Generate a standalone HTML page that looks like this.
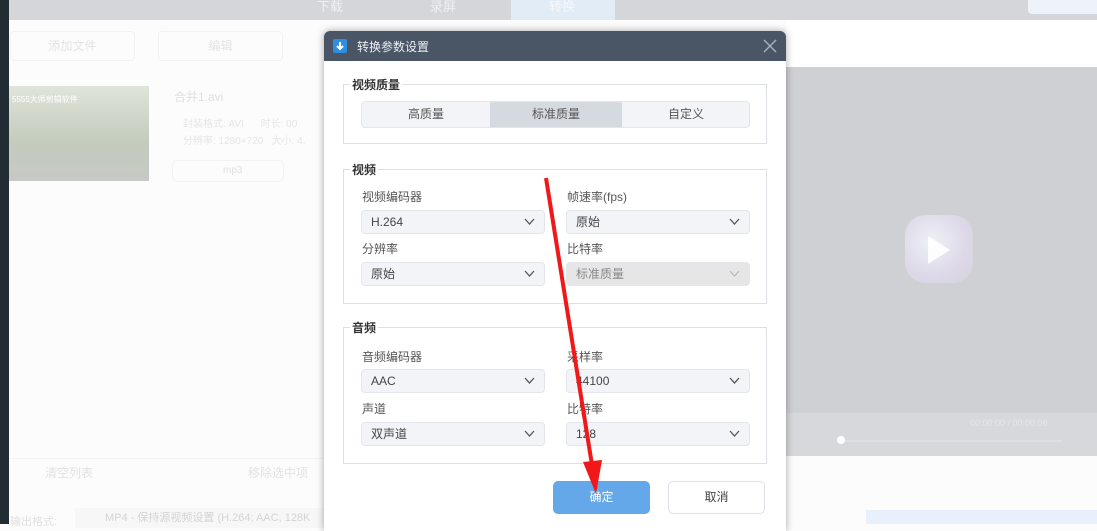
<!DOCTYPE html>
<html><head><meta charset="utf-8"><style>
*{box-sizing:border-box;margin:0;padding:0}
body{width:1097px;height:524px;overflow:hidden;background:#fcfcfc;font-family:"Liberation Sans","Noto Sans CJK SC",sans-serif;position:relative;font-size:12px;color:#444}
.a{position:absolute}
.lbl{position:absolute;font-size:12px;color:#555}
.sel{position:absolute;height:24px;background:#f2f4f7;border:1px solid #e3e6ea;border-radius:4px;font-size:12px;color:#444;padding-left:9px;line-height:22px}
.sel svg{position:absolute;right:9px;top:7px}
.fs{position:absolute;border:1px solid #dcdfe3}
.lg{position:absolute;background:#fff;font-size:12px;font-weight:bold;color:#333;padding:0 2px}
</style></head><body>
<div class="a" style="left:0;top:0;width:1097px;height:20px;background:#d5d6d9"></div>
<div class="a" style="left:0;top:0;width:9px;height:524px;background:#222d33"></div>
<div class="a" style="left:317px;top:-4px;color:#f0f0f2;font-size:13px">下载</div>
<div class="a" style="left:430px;top:-4px;color:#f0f0f2;font-size:13px">录屏</div>
<div class="a" style="left:511px;top:0;width:104px;height:20px;background:#e2ecf7"></div>
<div class="a" style="left:549px;top:-4px;color:#f5f8fb;font-size:13px">转换</div>
<div class="a" style="left:1028px;top:0;width:69px;height:14px;background:#eef3fa;border-radius:0 0 0 4px"></div>
<div class="a" style="left:10px;top:31px;width:125px;height:30px;border:1px solid #f2f2f2;border-radius:4px;color:#e4e4e4;font-size:12px;text-align:center;line-height:28px">添加文件</div>
<div class="a" style="left:158px;top:31px;width:125px;height:30px;border:1px solid #f2f2f2;border-radius:4px;color:#e4e4e4;font-size:12px;text-align:center;line-height:28px">编辑</div>
<div class="a" style="left:9px;top:86px;width:140px;height:95px;background:linear-gradient(#dfe5d9,#c3cbbd 60%,#c7c9c4)"></div>
<div class="a" style="left:12px;top:94px;color:#fff;font-size:8px">5555大师剪辑软件</div>
<div class="a" style="left:174px;top:88px;color:#e0e0e0;font-size:12px">合并1.avi</div>
<div class="a" style="left:183px;top:115px;color:#e6e6e6;font-size:10px">封装格式: AVI &nbsp;&nbsp;&nbsp;&nbsp;&nbsp;时长: 00</div>
<div class="a" style="left:183px;top:132px;color:#e6e6e6;font-size:10px">分辨率: 1280×720 &nbsp;&nbsp;大小: 4.</div>
<div class="a" style="left:172px;top:160px;width:112px;height:22px;border:1px solid #f2f2f2;border-radius:5px;color:#e0e0e0;font-size:10px;padding-left:50px;line-height:20px">mp3</div>
<div class="a" style="left:9px;top:458px;width:315px;height:1px;background:#f2f2f2"></div>
<div class="a" style="left:45px;top:464px;color:#e2e2e2;font-size:12px">清空列表</div>
<div class="a" style="left:248px;top:464px;color:#e2e2e2;font-size:12px">移除选中项</div>
<div class="a" style="left:10px;top:513px;color:#e0e0e0;font-size:11px">输出格式:</div>
<div class="a" style="left:75px;top:508px;width:249px;height:20px;background:#f7f7f7;color:#d4d4d4;font-size:11px;padding-left:30px;line-height:20px;white-space:nowrap;overflow:hidden">MP4 - 保持源视频设置 (H.264; AAC, 128K</div>
<div class="a" style="left:786px;top:20px;width:311px;height:47px;background:#fff"></div>
<div class="a" style="left:786px;top:67px;width:311px;height:346px;background:#cfd0d4"></div>
<div class="a" style="left:905px;top:215px;width:68px;height:68px;border-radius:30%;background:radial-gradient(circle at 40% 40%,#eef1f7,#ddd8e8 60%,#d4d3dc)"></div>
<div class="a" style="left:928px;top:236px;width:0;height:0;border-left:22px solid rgba(255,255,255,.9);border-top:14px solid transparent;border-bottom:14px solid transparent"></div>
<div class="a" style="left:786px;top:413px;width:311px;height:43px;background:#d7d8db"></div>
<div class="a" style="left:842px;top:440px;width:220px;height:2px;background:#e0e0e3"></div>
<div class="a" style="left:837px;top:436px;width:8px;height:8px;border-radius:50%;background:#fff"></div>
<div class="a" style="left:970px;top:418px;color:#e6e6e8;font-size:9px">00:00:00 / 00:00:06</div>
<div class="a" style="left:866px;top:510px;width:231px;height:14px;background:#e8f1fb"></div>
<!-- dialog -->
<div class="a" style="left:324px;top:31px;width:462px;height:500px;background:#fff;border-radius:6px 6px 0 0;box-shadow:0 0 8px rgba(0,0,0,.35);overflow:hidden">
<div class="a" style="left:0;top:0;width:462px;height:30px;background:#4a5566"></div>
<div class="a" style="left:9px;top:8px;width:14px;height:14px;background:#2f8ee0;border-radius:2px"></div>
<svg class="a" style="left:9px;top:8px" width="14" height="14"><path d="M7 3v6M4 7l3 3 3-3" stroke="#fff" stroke-width="2" fill="none"/></svg>
<div class="a" style="left:33px;top:7px;color:#eef0f3;font-size:12px">转换参数设置</div>
<svg class="a" style="left:439px;top:8px" width="14" height="14"><path d="M1 1l12 12M13 1L1 13" stroke="#aab2bd" stroke-width="1.4"/></svg>
</div>
<div class="fs" style="left:343px;top:84px;width:424px;height:60px"></div>
<div class="lg" style="left:350px;top:76px">视频质量</div>
<div class="a" style="left:361px;top:101px;width:389px;height:27px;border:1px solid #e3e6ea;border-radius:4px;background:#f2f4f7;overflow:hidden">
<div class="a" style="left:0;top:0;width:128px;height:25px;text-align:center;line-height:25px;color:#555">高质量</div>
<div class="a" style="left:128px;top:0;width:132px;height:25px;background:#d5dae1;text-align:center;line-height:25px;color:#555">标准质量</div>
<div class="a" style="left:260px;top:0;width:128px;height:25px;text-align:center;line-height:25px;color:#555">自定义</div>
</div>
<div class="fs" style="left:343px;top:169px;width:424px;height:135px"></div>
<div class="lg" style="left:350px;top:161px">视频</div>
<div class="lbl" style="left:362px;top:188px">视频编码器</div>
<div class="lbl" style="left:567px;top:188px">帧速率(fps)</div>
<div class="sel" style="left:361px;top:210px;width:184px">H.264<svg width="11" height="8"><path d="M1 1l4.5 5 4.5-5" stroke="#555" fill="none" stroke-width="1.3"/></svg></div>
<div class="sel" style="left:566px;top:210px;width:184px">原始<svg width="11" height="8"><path d="M1 1l4.5 5 4.5-5" stroke="#555" fill="none" stroke-width="1.3"/></svg></div>
<div class="lbl" style="left:362px;top:240px">分辨率</div>
<div class="lbl" style="left:567px;top:240px">比特率</div>
<div class="sel" style="left:361px;top:262px;width:184px">原始<svg width="11" height="8"><path d="M1 1l4.5 5 4.5-5" stroke="#555" fill="none" stroke-width="1.3"/></svg></div>
<div class="sel" style="left:566px;top:262px;width:184px;background:#e6e6e6;color:#888">标准质量<svg width="11" height="8"><path d="M1 1l4.5 5 4.5-5" stroke="#bbb" fill="none" stroke-width="1.3"/></svg></div>
<div class="fs" style="left:343px;top:327px;width:424px;height:137px"></div>
<div class="lg" style="left:350px;top:319px">音频</div>
<div class="lbl" style="left:362px;top:348px">音频编码器</div>
<div class="lbl" style="left:567px;top:348px">采样率</div>
<div class="sel" style="left:361px;top:369px;width:184px">AAC<svg width="11" height="8"><path d="M1 1l4.5 5 4.5-5" stroke="#555" fill="none" stroke-width="1.3"/></svg></div>
<div class="sel" style="left:566px;top:369px;width:184px">44100<svg width="11" height="8"><path d="M1 1l4.5 5 4.5-5" stroke="#555" fill="none" stroke-width="1.3"/></svg></div>
<div class="lbl" style="left:362px;top:400px">声道</div>
<div class="lbl" style="left:567px;top:400px">比特率</div>
<div class="sel" style="left:361px;top:422px;width:184px">双声道<svg width="11" height="8"><path d="M1 1l4.5 5 4.5-5" stroke="#555" fill="none" stroke-width="1.3"/></svg></div>
<div class="sel" style="left:566px;top:422px;width:184px">128<svg width="11" height="8"><path d="M1 1l4.5 5 4.5-5" stroke="#555" fill="none" stroke-width="1.3"/></svg></div>
<div class="a" style="left:553px;top:481px;width:97px;height:33px;background:#64a8ea;border-radius:5px;color:#fff;text-align:center;line-height:33px">确定</div>
<div class="a" style="left:668px;top:481px;width:97px;height:33px;background:#fff;border:1px solid #dde1e6;border-radius:5px;color:#444;text-align:center;line-height:31px">取消</div>
<svg class="a" style="left:0;top:0" width="1097" height="524"><path d="M546 178L592 465" stroke="#f01818" stroke-width="4"/><path d="M583 462L596 494L602 460Z" fill="#f01818"/></svg>
</body></html>
